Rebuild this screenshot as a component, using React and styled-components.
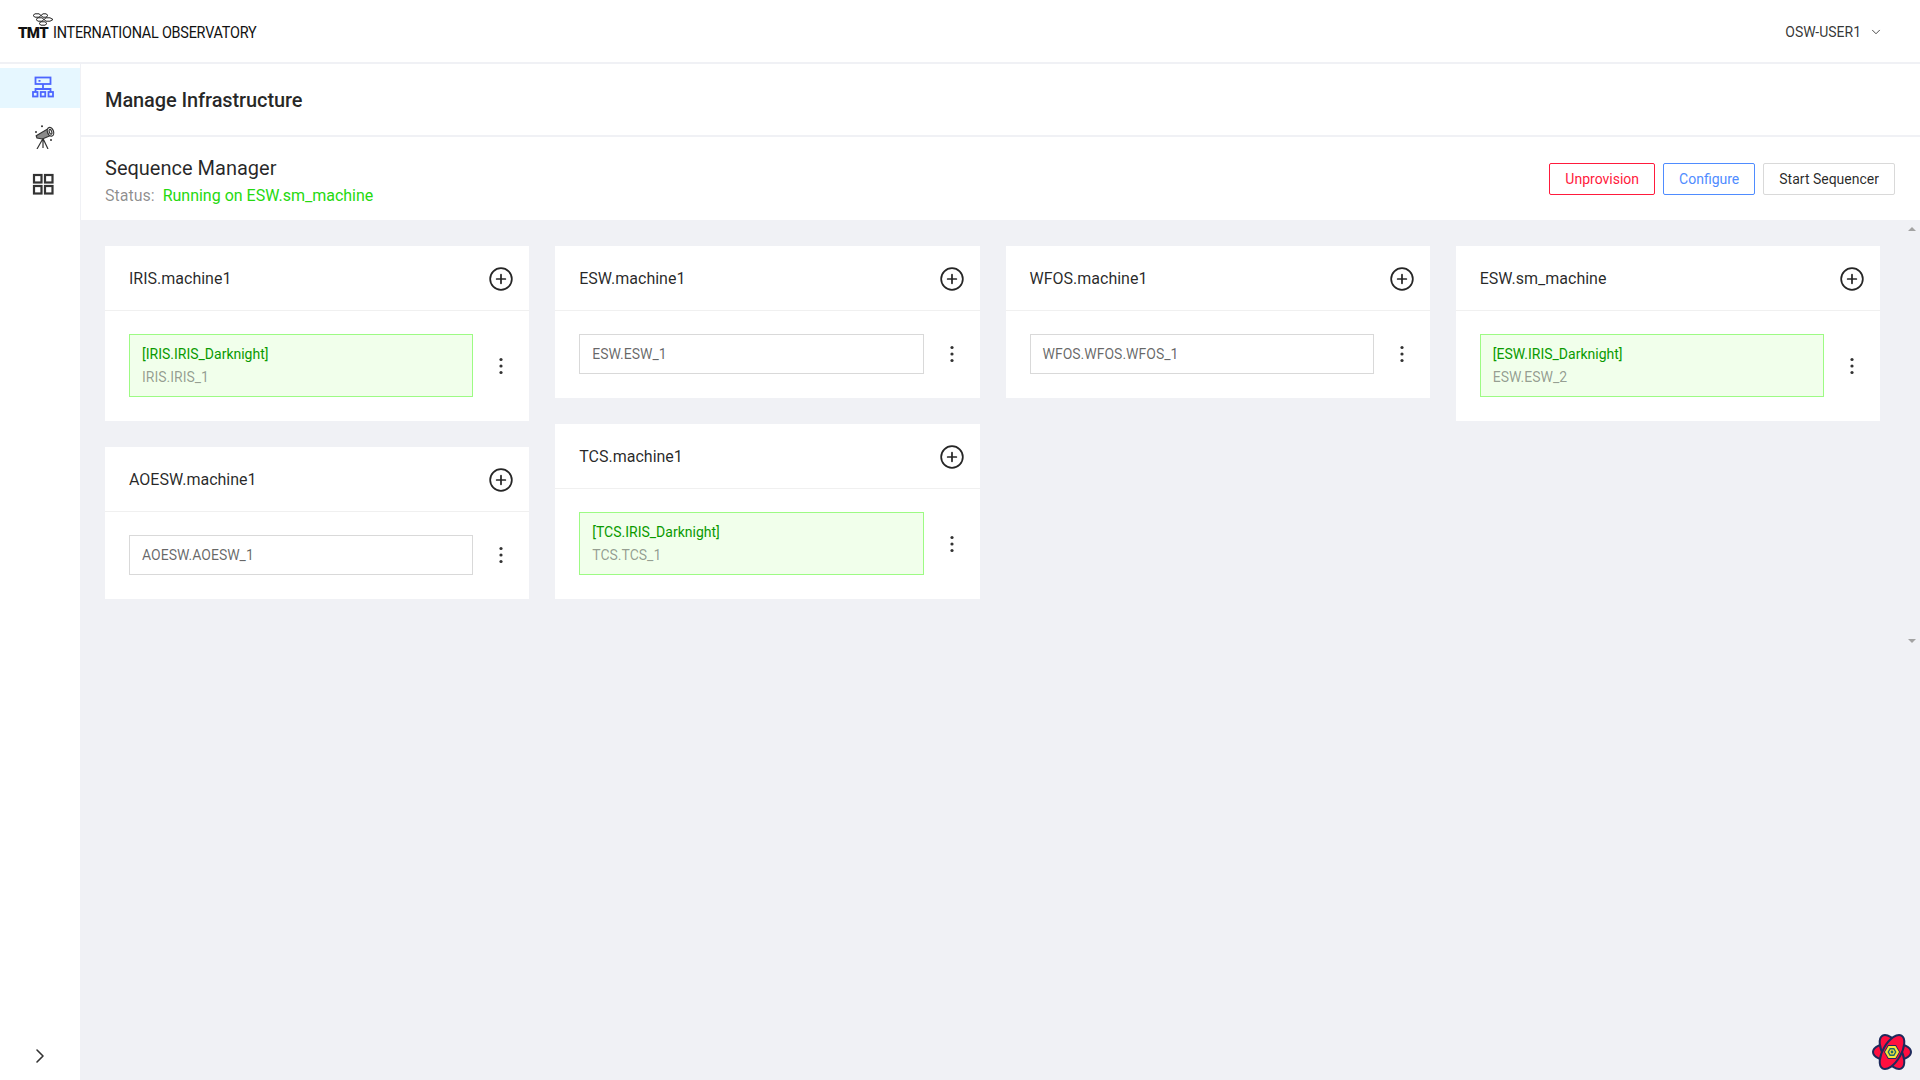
import React from 'react'
import styled, { createGlobalStyle } from 'styled-components'
import { ChevronDown, ChevronRight, CirclePlus } from 'lucide-react'

const GlobalStyle = createGlobalStyle`
  html, body {
    margin: 0;
    padding: 0;
    height: 100%;
    overflow: hidden;
    background: #fff;
    color: rgba(0, 0, 0, 0.85);
    font-family: Roboto, "Liberation Sans", sans-serif;
    font-size: 14px;
    line-height: 22px;
  }
  * {
    box-sizing: border-box;
  }
`

const Page = styled.div`
  display: flex;
  flex-direction: column;
  width: 1920px;
  height: 1080px;
  position: relative;
  overflow: hidden;
`

const TopBar = styled.header`
  flex: 0 0 64px;
  display: flex;
  align-items: center;
  justify-content: space-between;
  padding: 0 37px 0 18px;
  background: #fff;
  border-bottom: 2px solid #f0f1f5;
`

const Logo = styled.div`
  position: relative;
  display: flex;
  align-items: baseline;
  gap: 5px;
  margin-top: 4px;
  color: #111;
`

const LogoMark = styled.svg`
  position: absolute;
  left: 14px;
  top: -9px;
`

const LogoTmt = styled.span`
  font-size: 15px;
  font-weight: 900;
  letter-spacing: -0.6px;
`

const LogoText = styled.span`
  font-size: 16px;
  letter-spacing: -0.25px;
  transform: scaleX(0.9);
  transform-origin: left center;
  width: 204px;
  white-space: nowrap;
`

const UserMenu = styled.div`
  display: flex;
  align-items: center;
  gap: 8px;
  margin-top: 2px;
  font-size: 14px;
  color: rgba(0, 0, 0, 0.8);
`

const Body = styled.div`
  flex: 1;
  display: flex;
  min-height: 0;
`

const Sidebar = styled.nav`
  flex: 0 0 81px;
  display: flex;
  flex-direction: column;
  padding-top: 4px;
  background: #fff;
  border-right: 1px solid #f0f1f5;
`

const NavItem = styled.div`
  height: 40px;
  margin-bottom: 8px;
  display: flex;
  align-items: center;
  justify-content: center;
  padding-left: 6px;
  background: ${(p) => (p.$active ? '#e6f7ff' : 'transparent')};
  color: ${(p) => (p.$active ? '#4d66ff' : '#333')};
`

const SidebarToggle = styled.div`
  margin-top: auto;
  height: 48px;
  display: flex;
  align-items: center;
  justify-content: center;
  color: #333;
`

const Main = styled.main`
  flex: 1;
  display: flex;
  flex-direction: column;
  min-width: 0;
  background: #f0f1f5;
`

const TitleBar = styled.div`
  flex: 0 0 73px;
  display: flex;
  align-items: center;
  padding-left: 24px;
  background: #fff;
  border-bottom: 2px solid #f0f1f5;
`

const Title = styled.h1`
  margin: 0;
  font-size: 20px;
  font-weight: 500;
  letter-spacing: -0.1px;
  color: rgba(0, 0, 0, 0.85);
`

const SubHeader = styled.div`
  flex: 0 0 83px;
  display: flex;
  align-items: center;
  justify-content: space-between;
  padding: 4px 25px 0 24px;
  background: #fff;
`

const SubTitle = styled.div`
  font-size: 20px;
  line-height: 28px;
  color: rgba(0, 0, 0, 0.85);
`

const Status = styled.div`
  margin-top: 2px;
  font-size: 16px;
  line-height: 24px;
  color: rgba(0, 0, 0, 0.45);
`

const StatusValue = styled.span`
  margin-left: 8px;
  color: #25d90f;
`

const Actions = styled.div`
  display: flex;
  gap: 8px;
  margin-top: -4px;
`

const Button = styled.button`
  height: 32px;
  padding: 0 15px;
  background: #fff;
  border: 1px solid ${(p) => p.$color || '#d9d9d9'};
  border-radius: 2px;
  color: ${(p) => p.$color || 'rgba(0, 0, 0, 0.85)'};
  font-family: inherit;
  font-size: 14px;
`

const CardGrid = styled.div`
  display: grid;
  grid-template-columns: repeat(4, 1fr);
  column-gap: 26px;
  align-items: start;
  padding: 26px 40px 0 24px;
`

const Column = styled.div`
  display: flex;
  flex-direction: column;
  gap: 26px;
`

const Card = styled.section`
  background: #fff;
`

const CardHeader = styled.div`
  height: 65px;
  display: flex;
  align-items: center;
  justify-content: space-between;
  padding: 1px 15px 0 24px;
  border-bottom: 1px solid #f0f0f0;
  font-size: 16px;
  color: rgba(0, 0, 0, 0.85);
`

const CardBody = styled.div`
  display: flex;
  flex-direction: column;
  gap: 16px;
  padding: 23px 0 24px 24px;
`

const Row = styled.div`
  display: flex;
  align-items: center;
`

const Sequencer = styled.div`
  flex: 1;
  display: flex;
  flex-direction: column;
  gap: ${(p) => (p.$running ? '1px' : '0')};
  padding: 8px 12px;
  border: 1px solid ${(p) => (p.$running ? '#9dfb84' : '#d9d9d9')};
  background: ${(p) => (p.$running ? '#f1ffeb' : '#fff')};
`

const ScriptName = styled.div`
  color: #0a9a00;
`

const SequencerName = styled.div`
  color: ${(p) => (p.$running ? 'rgba(0, 0, 0, 0.4)' : 'rgba(0, 0, 0, 0.6)')};
`

const Kebab = styled.div`
  flex: 0 0 56px;
  display: flex;
  justify-content: center;
  color: #333;
`

const ScrollArrow = styled.div`
  position: absolute;
  left: 1908px;
  top: ${(p) => p.$top}px;
  width: 0;
  height: 0;
  border-left: 4px solid transparent;
  border-right: 4px solid transparent;
  ${(p) => (p.$down ? 'border-top' : 'border-bottom')}: 4px solid #a3a3a3;
`

const DevtoolsBadge = styled.svg`
  position: absolute;
  left: 1871px;
  top: 1031px;
`

const NetworkSvg = styled.svg`
  margin-bottom: 3px;
`

const TelescopeSvg = styled.svg`
  margin-top: 2px;
`

const NetworkIcon = () => (
  <NetworkSvg width="22" height="22" viewBox="0 0 22 22" fill="none" stroke="currentColor" strokeWidth="1.8">
    <rect x="3.5" y="1.5" width="15" height="6.5" />
    <path d="M6.5 4.8h2M11 8v5M3.5 16v-3h15v3" />
    <rect x="1" y="16" width="4.5" height="4.5" />
    <rect x="8.75" y="16" width="4.5" height="4.5" />
    <rect x="16.5" y="16" width="4.5" height="4.5" />
  </NetworkSvg>
)

const TelescopeIcon = () => (
  <TelescopeSvg width="24" height="24" viewBox="0 0 24 24" fill="none" stroke="#333" strokeWidth="1.2">
    <path d="M6 13l-0.800-2.200L16.500 4l3 6.500-8 3.500z" fill="#8a8a8a" />
    <ellipse cx="19.500" cy="6.800" rx="3" ry="4.500" transform="rotate(-20 19.500 6.800)" fill="#fff" />
    <ellipse cx="19.500" cy="6.800" rx="1.200" ry="2.500" transform="rotate(-20 19.500 6.800)" />
    <path d="M12 13.500L6 24M12 13.500L17 24M12 13.500V23" />
    <circle cx="11" cy="1.300" r="1" fill="#333" stroke="none" />
    <circle cx="5" cy="7" r="1" fill="#333" stroke="none" />
    <circle cx="20" cy="15" r="1" fill="#333" stroke="none" />
  </TelescopeSvg>
)

const GridIcon = () => (
  <svg width="22" height="22" viewBox="0 0 22 22" fill="none" stroke="#333" strokeWidth="2.2">
    <rect x="2" y="2" width="7.500" height="7.500" />
    <rect x="13" y="2" width="7.500" height="7.500" />
    <rect x="2" y="13" width="7.500" height="7.500" />
    <rect x="13" y="13" width="7.500" height="7.500" />
  </svg>
)

const DotsIcon = () => (
  <svg width="4" height="18" viewBox="0 0 4 18" fill="currentColor">
    <circle cx="2" cy="2.500" r="1.600" />
    <circle cx="2" cy="9" r="1.600" />
    <circle cx="2" cy="15.500" r="1.600" />
  </svg>
)

const machines = [
  [
    { name: 'IRIS.machine1', sequencer: 'IRIS.IRIS_1', script: '[IRIS.IRIS_Darknight]' },
    { name: 'AOESW.machine1', sequencer: 'AOESW.AOESW_1' },
  ],
  [
    { name: 'ESW.machine1', sequencer: 'ESW.ESW_1' },
    { name: 'TCS.machine1', sequencer: 'TCS.TCS_1', script: '[TCS.IRIS_Darknight]' },
  ],
  [{ name: 'WFOS.machine1', sequencer: 'WFOS.WFOS.WFOS_1' }],
  [{ name: 'ESW.sm_machine', sequencer: 'ESW.ESW_2', script: '[ESW.IRIS_Darknight]' }],
]

const MachineCard = ({ name, sequencer, script }) => (
  <Card>
    <CardHeader>
      {name}
      <CirclePlus size={26} strokeWidth={1.6} color="#262626" />
    </CardHeader>
    <CardBody>
      <Row>
        <Sequencer $running={!!script}>
          {script && <ScriptName>{script}</ScriptName>}
          <SequencerName $running={!!script}>{sequencer}</SequencerName>
        </Sequencer>
        <Kebab>
          <DotsIcon />
        </Kebab>
      </Row>
    </CardBody>
  </Card>
)

const Hexagon = ({ r, fill }) => {
  const points = [0, 60, 120, 180, 240, 300]
    .map((a) => {
      const rad = (a * Math.PI) / 180
      return `${21 + r * Math.cos(rad)},${21 + r * Math.sin(rad)}`
    })
    .join(' ')
  return <polygon points={points} fill={fill} />
}

export default function App() {
  return (
    <Page>
      <GlobalStyle />
      <TopBar>
        <Logo>
          <LogoMark width="22" height="13" viewBox="0 0 22 13" fill="none" stroke="#222" strokeWidth="1">
            <path d="M1 2.500L3 .8h4l2 1.700-2 1.700H3zM9 2.500l2-1.700h3l2 1.700-2 1.700h-3zM4 6.500l2-1.700h4l2 1.700-2 1.700H6zM12 6.500l2-1.700h4l3 1.700-3 1.700h-4zM7 10.500l2-1.700h4l2 1.700-2 1.700H9z" />
          </LogoMark>
          <LogoTmt>TMT</LogoTmt>
          <LogoText>INTERNATIONAL OBSERVATORY</LogoText>
        </Logo>
        <UserMenu>
          OSW-USER1
          <ChevronDown size={14} strokeWidth={1.500} />
        </UserMenu>
      </TopBar>
      <Body>
        <Sidebar>
          <NavItem $active>
            <NetworkIcon />
          </NavItem>
          <NavItem>
            <TelescopeIcon />
          </NavItem>
          <NavItem>
            <GridIcon />
          </NavItem>
          <SidebarToggle>
            <ChevronRight size={24} strokeWidth={1.6} />
          </SidebarToggle>
        </Sidebar>
        <Main>
          <TitleBar>
            <Title>Manage Infrastructure</Title>
          </TitleBar>
          <SubHeader>
            <div>
              <SubTitle>Sequence Manager</SubTitle>
              <Status>
                Status:
                <StatusValue>Running on ESW.sm_machine</StatusValue>
              </Status>
            </div>
            <Actions>
              <Button $color="#ff1a3c">Unprovision</Button>
              <Button $color="#4f8cff">Configure</Button>
              <Button>Start Sequencer</Button>
            </Actions>
          </SubHeader>
          <CardGrid>
            {machines.map((column, i) => (
              <Column key={i}>
                {column.map((machine) => (
                  <MachineCard key={machine.name} {...machine} />
                ))}
              </Column>
            ))}
          </CardGrid>
        </Main>
      </Body>
      <ScrollArrow $top={227} />
      <ScrollArrow $top={639} $down />
      <DevtoolsBadge width="42" height="42" viewBox="0 0 42 42">
        <g fill="#ff0f3f" stroke="#1d2a5c" strokeWidth="2">
          <ellipse cx="21" cy="21" rx="19" ry="9" />
          <ellipse cx="21" cy="21" rx="19" ry="9" transform="rotate(60 21 21)" />
          <ellipse cx="21" cy="21" rx="19" ry="9" transform="rotate(120 21 21)" />
        </g>
        <Hexagon r={8} fill="#1d2a5c" />
        <Hexagon r={7} fill="#f5e63a" />
        <Hexagon r={4.500} fill="#1d6a6a" />
        <Hexagon r={3} fill="#f5e63a" />
        <circle cx="21" cy="21" r="1.400" fill="#1d6a6a" />
      </DevtoolsBadge>
    </Page>
  )
}
